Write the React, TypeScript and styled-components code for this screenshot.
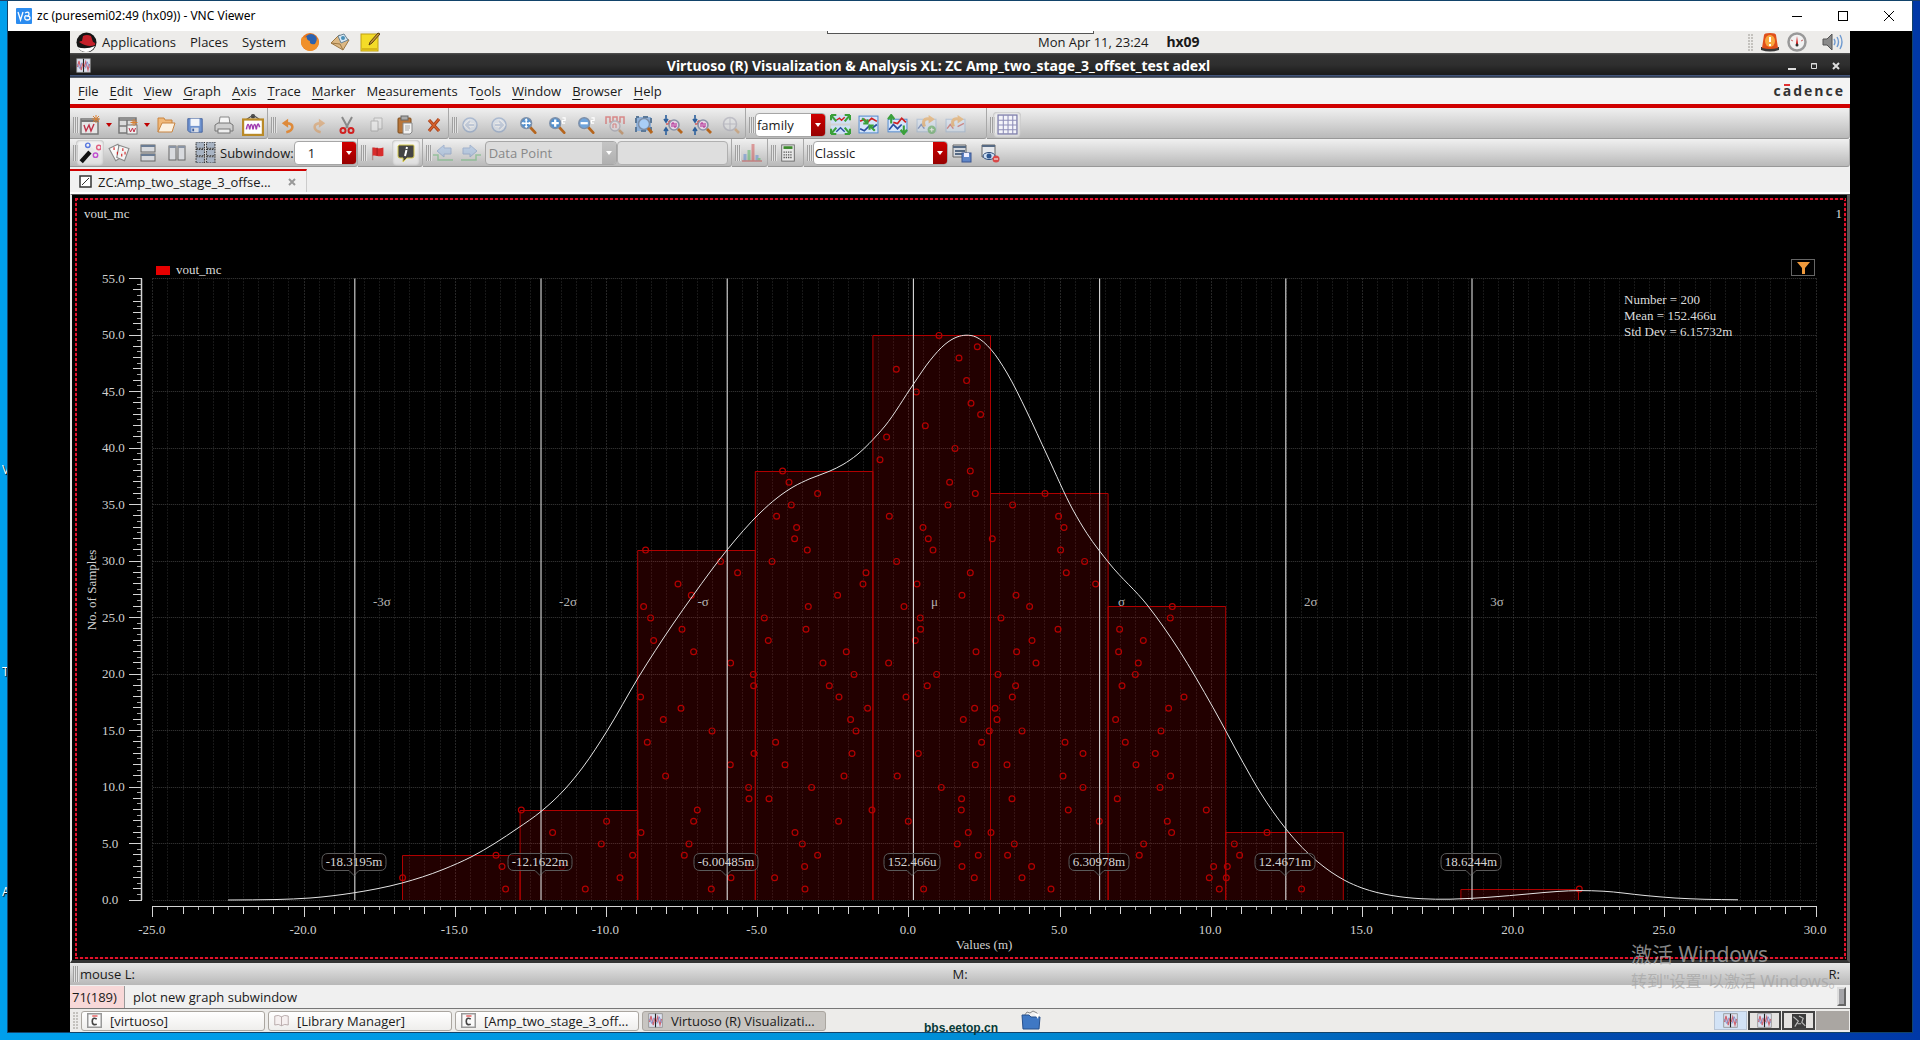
import React from "react";
import styled, { createGlobalStyle, css } from "styled-components";

const ui = `"Open Sans", "Noto Sans", sans-serif`;
const serif = `"Liberation Serif", "DejaVu Serif", serif`;
const cjk = `"Noto Sans", "Noto Sans CJK SC", sans-serif`;

const GlobalStyle = createGlobalStyle`
  *, *::before, *::after { box-sizing: border-box; }
  body { margin: 0; background: #0078d0; }
  button, select, input { font: inherit; color: inherit; margin: 0; }
`;

/* ---------- desktop and window ---------- */

const Desktop = styled.div`
  position: relative;
  display: flex;
  min-height: 100vh;
  padding: 1px 8px 8px;
  overflow: hidden;
  font: 13px/18px ${ui};
  color: #1a1a1a;
  background: linear-gradient(90deg, #009fec 0%, #0093da 45%, #0080cc 60%, #0050b0 78%, #0038a6 100%);
  box-shadow: inset 0 1px #1c3f68;
`;

const IconLabel = styled.span<{ $top: string }>`
  position: absolute;
  left: 2px;
  top: ${(p) => p.$top};
  width: 6px;
  overflow: hidden;
  font-size: 12px;
  color: #fff;
  text-shadow: 1px 1px 1px #000;
`;

const Window = styled.div`
  position: relative;
  flex: 1;
  display: flex;
  flex-direction: column;
  background: #000;
  box-shadow: 0 0 0 1px #12436a;
`;

const VncBar = styled.header`
  display: flex;
  align-items: center;
  height: 30px;
  padding-left: 8px;
  background: #fff;
  color: #000;
  font: 12px/18px "Noto Sans", sans-serif;
`;

const VncTitle = styled.span`
  padding-left: 5px;
`;

const Fill = styled.div<{ $grow?: number }>`
  flex: ${(p) => p.$grow ?? 1};
`;

const CaptionButton = styled.button`
  width: 46px;
  height: 30px;
  display: grid;
  place-items: center;
  padding: 0;
  border: 0;
  background: none;
`;

const Guest = styled.div`
  flex: 1;
  display: flex;
  flex-direction: column;
  margin: 0 62px;
  background: #f0f0f0;
`;

const VncHandle = styled.div`
  position: absolute;
  top: 30px;
  left: 43%;
  width: 267px;
  height: 3px;
  background: #fff;
  border: 1px solid #555;
  border-top: 0;
`;

/* ---------- gnome panel ---------- */

const Panel = styled.div`
  display: flex;
  align-items: center;
  height: 22px;
  padding: 0 6px;
  background: #edecea;
`;

const PanelButton = styled.button`
  border: 0;
  padding: 0;
  margin-right: 14px;
  background: none;
  display: flex;
  align-items: center;
  gap: 5px;
`;

const Launchers = styled.div`
  display: flex;
  gap: 10px;
`;

const Clock = styled.div`
  display: flex;
  gap: 18px;
  b { font: 700 14px/18px "Noto Sans", sans-serif; }
`;

const Tray = styled.div`
  display: flex;
  align-items: center;
  gap: 7px;
`;

const Dots = styled.i`
  width: 5px;
  height: 17px;
  background: radial-gradient(circle at 1px 1px, #c4c2be 1px, transparent 1px) 0 0 / 3px 3px;
`;

/* ---------- application window ---------- */

const AppTitle = styled.div`
  display: grid;
  grid-template-columns: 15px 1fr auto;
  align-items: center;
  height: 25px;
  padding: 0 8px 0 6px;
  color: #fff;
  font: 700 14px/18px "Noto Sans", sans-serif;
  text-align: center;
  background: linear-gradient(#555 0, #333 2px, #2e2e2e 12px, #1a1a1a 22px, #4a5f8c 22px, #2a3548 24px, #8c8c8c 25px);
`;

const AppControls = styled.div`
  display: flex;
  justify-content: flex-end;
  gap: 10px;
`;

const TinyButton = styled.button`
  width: 12px;
  height: 14px;
  padding: 0;
  border: 0;
  display: grid;
  place-items: center;
  background: none;
`;

const MenuBar = styled.nav`
  display: flex;
  align-items: center;
  gap: 11px;
  height: 30px;
  padding: 0 5px 0 8px;
  background: #f4f4f4;
  border-bottom: 4px solid #d00000;
`;

const MenuButton = styled.button`
  border: 0;
  padding: 0;
  background: none;
  u { text-underline-offset: 3px; }
`;

const Brand = styled.div`
  margin-left: auto;
  font: 700 14px/18px "Open Sans", sans-serif;
  letter-spacing: 2px;
  color: #333;
  span { position: relative; }
  span::after {
    content: "";
    position: absolute;
    left: 1px;
    top: 3px;
    width: 6px;
    height: 2px;
    background: #e03030;
  }
`;

const ToolRow = styled.div<{ $h: number }>`
  display: flex;
  height: ${(p) => p.$h}px;
`;

const Group = styled.div<{ $w?: number; $gap?: number; $top?: number }>`
  display: flex;
  align-items: center;
  gap: ${(p) => p.$gap ?? 0}px;
  ${(p) => (p.$w ? css`flex: 0 0 ${p.$w}px;` : css`flex: 1;`)}
  padding: ${(p) => p.$top ?? 0}px 0 0 3px;
  background: linear-gradient(#f0f0f0, #d8d8d8 45%, #b9b9b9);
  border-bottom: 1px solid #989898;
  border-right: 1px solid #a8a8a8;
  border-radius: 0 0 3px 0;
`;

const Grip = styled.i`
  flex: none;
  width: 6px;
  height: 16px;
  background: repeating-linear-gradient(90deg, #a0a0a0 0 1px, #e2e2e2 1px 2px);
  & + button { margin-left: -3px; }
`;

const ToolButton = styled.button<{ $on?: boolean; $w?: number; $dim?: boolean }>`
  flex: none;
  width: ${(p) => p.$w ?? 28}px;
  height: 26px;
  padding: 0;
  border: 0;
  border-radius: 4px;
  display: grid;
  place-items: center;
  background: ${(p) => (p.$on ? "rgba(255,255,255,.5)" : "none")};
  box-shadow: ${(p) => (p.$on ? "inset 0 0 3px #999" : "none")};
  svg { opacity: ${(p) => (p.$dim ? 0.45 : 1)}; }
`;

const ComboLabel = styled.label`
  display: flex;
  align-items: center;
  white-space: nowrap;
`;

const ComboBox = styled.span<{ $w: number; $off?: boolean; $h: number }>`
  position: relative;
  display: block;
  flex: none;
  width: ${(p) => p.$w}px;
  height: ${(p) => p.$h}px;
  border-radius: 4px;
  overflow: hidden;
  border: 1px solid #a6a6a6;
  background: ${(p) => (p.$off ? "#dcdcdc" : "#fff")};
  color: ${(p) => (p.$off ? "#888" : "#1a1a1a")};
  &::before {
    content: "";
    position: absolute;
    right: 0;
    top: 0;
    bottom: 0;
    width: 14px;
    background: ${(p) => (p.$off ? "linear-gradient(#c4c4c4, #b0b0b0)" : "linear-gradient(#d00000, #960000)")};
  }
  &::after {
    content: "";
    position: absolute;
    right: 4px;
    top: 9px;
    border: 3px solid transparent;
    border-top: 4px solid #fff;
    border-bottom: 0;
  }
`;

const Select = styled.select<{ $pad: number }>`
  appearance: none;
  width: 100%;
  height: 100%;
  padding: 0 16px 0 ${(p) => p.$pad}px;
  border: 0;
  background: transparent;
  opacity: 1;
  &:disabled { color: #888; opacity: 1; }
`;

const LineEdit = styled.input`
  width: 111px;
  height: 24px;
  border: 1px solid #b0b0b0;
  border-radius: 4px;
  background: #dedede;
`;

const TabStrip = styled.div`
  display: flex;
  height: 27px;
  padding-top: 2px;
  background: #efefef;
  border-bottom: 2px solid #fff;
`;

const Tab = styled.div`
  display: flex;
  align-items: center;
  gap: 6px;
  width: 237px;
  padding: 0 10px 0 9px;
  border-top: 2px solid #d00000;
  border-right: 1px solid #ccc;
  background: #f1f1f1;
`;

const TabClose = styled.button`
  margin-left: auto;
  padding: 0;
  border: 0;
  background: none;
  display: grid;
`;

/* ---------- plot ---------- */

const Canvas = styled.main`
  flex: 1;
  display: flex;
  padding: 3px 1px 1px 3px;
  background: #000;
  border: solid;
  border-width: 1px 3px 3px 2px;
  border-color: #555 #555 #333 #e6e6e6;
`;

const dash = "#e4102c 0 3px, #200 3px 5px";
const DashFrame = styled.div`
  position: relative;
  flex: 1;
  display: flex;
  flex-direction: column;
  padding: 2px;
  font: 13px/16px ${serif};
  color: #dcdcdc;
  background:
    repeating-linear-gradient(90deg, ${dash}) 0 0 / 100% 2px no-repeat,
    repeating-linear-gradient(90deg, ${dash}) 0 100% / 100% 2px no-repeat,
    repeating-linear-gradient(180deg, ${dash}) 0 0 / 2px 100% no-repeat,
    repeating-linear-gradient(180deg, ${dash}) 100% 0 / 2px 100% no-repeat,
    #000;
`;

const PlotHeader = styled.div`
  display: flex;
  justify-content: space-between;
  padding: 6px 2px 37px 7px;
`;

const LegendRow = styled.div`
  display: flex;
  align-items: flex-end;
  height: 19px;
  padding: 0 29px 0 79px;
`;

const Legend = styled.span`
  display: flex;
  align-items: center;
  gap: 6px;
`;

const Swatch = styled.i`
  width: 14px;
  height: 9px;
  background: #e80000;
`;

const FilterButton = styled.button`
  align-self: flex-start;
  margin-left: auto;
  width: 24px;
  height: 17px;
  padding: 0;
  display: grid;
  place-items: center;
  background: #000;
  border: 1px solid #666;
`;

const Stats = styled.div`
  position: absolute;
  top: 94px;
  right: 112px;
  width: 110px;
  white-space: nowrap;
`;

const Chart = styled.svg`
  flex: 1 1 0;
  display: block;
  width: 100%;
  height: 0;
  min-height: 300px;
  overflow: visible;
  font: 13px ${serif};
`;

/* ---------- footer rows ---------- */

const MouseBar = styled.div`
  display: grid;
  grid-template-columns: 1fr auto 1fr;
  align-items: center;
  height: 22px;
  padding: 0 3px;
  background: linear-gradient(#e6e6e6, #cfcfcf 50%, #b8b8b8);
  > :last-child { text-align: right; padding-right: 7px; }
`;

const MouseLeft = styled.span`
  display: flex;
  align-items: center;
  gap: 1px;
`;

const MessageBar = styled.div`
  display: flex;
  align-items: center;
  height: 24px;
  padding-right: 4px;
  background: #f0f0f0;
  border-bottom: 1px solid #777;
`;

const Count = styled.span`
  width: 55px;
  padding: 2px 0 2px 2px;
  margin-right: 8px;
  background: #f8d8d8;
  border-right: 1px solid #999;
`;

const Nub = styled.i`
  margin-left: auto;
  width: 9px;
  height: 19px;
  border: 2px solid #ddd;
  border-right-color: #666;
  border-bottom-color: #666;
  background: #a4a4a8;
`;

const TaskBar = styled.div`
  position: relative;
  display: flex;
  align-items: center;
  gap: 3px;
  height: 23px;
  padding: 0 1px 0 3px;
  background: #edecea;
`;

const TaskButton = styled.button<{ $active?: boolean }>`
  width: 184px;
  height: 20px;
  display: flex;
  align-items: center;
  gap: 8px;
  padding: 0 5px;
  border: 1px solid #aaa6a0;
  border-radius: 3px;
  white-space: nowrap;
  background: ${(p) => (p.$active ? "#c8c5c1" : "linear-gradient(#fff, #efeeec)")};
`;

const Pager = styled.div`
  margin-left: auto;
  display: flex;
  gap: 1px;
`;

const Space = styled.button<{ $kind: "on" | "open" | "empty" }>`
  width: 33px;
  height: 19px;
  padding: 0;
  display: grid;
  place-items: center;
  background: ${(p) => ({ on: "#d3e3f6", open: "#e4e2e0", empty: "#aaa6a2" })[p.$kind]};
  border: ${(p) => ({ on: "1px solid #b8c4d4", open: "2px solid #444", empty: "0" })[p.$kind]};
`;

const SiteMark = styled.div`
  position: absolute;
  left: 854px;
  bottom: -4px;
  font: 700 12px/16px "Liberation Sans Narrow", "Liberation Sans", sans-serif;
  color: #063a38;
`;

const FolderSpot = styled.div`
  position: absolute;
  left: 951px;
  top: 1px;
`;

const Watermark = styled.div`
  position: absolute;
  right: 84px;
  bottom: 39px;
  width: 197px;
  font: 16px/24px ${cjk};
  white-space: nowrap;
  color: rgba(160, 160, 160, 0.65);
  pointer-events: none;
`;

const WatermarkHead = styled.div`
  font-size: 21px;
  line-height: 30px;
  color: rgba(170, 170, 170, 0.8);
`;

/* ---------- icons ---------- */

const Ico = ({ s = 20, children }: { s?: number; children: React.ReactNode }) => (
  <svg width={s} height={s} viewBox="0 0 20 20" fill="none" aria-hidden="true">
    {children}
  </svg>
);

const Lens = ({ fill = "#b9d5f3", children }: { fill?: string; children?: React.ReactNode }) => (
  <>
    <path d="M12.5 12.5l5.5 6" stroke="#b5651d" strokeWidth="3" strokeLinecap="round" />
    <circle cx="8" cy="8" r="6" fill={fill} stroke="#7d8fa8" strokeWidth="1.6" />
    {children}
  </>
);

const Wave = () => (
  <Ico s={15}>
    <rect x="1" y="1" width="18" height="18" fill="#dde3f0" stroke="#888" />
    <path d="M10 1v18" stroke="#222" strokeWidth="1.5" />
    <path d="M2 12l2-8 3 12 2-9M11 12l2-7 3 11 2-8" stroke="#cf6470" strokeWidth="1.6" />
    <path d="M2 8l3 6 3-8M12 14l3-9 3 8" stroke="#7f90cc" strokeWidth="1.2" />
  </Ico>
);

const icons: Record<string, React.ReactNode> = {
  newWin: (
    <Ico>
      <rect x="1" y="4" width="17" height="15" fill="#e6e6e6" stroke="#777" strokeWidth="1.5" />
      <path d="M1 6h17" stroke="#777" strokeWidth="2" />
      <path d="M4 10l2 6 3-6 2 6 3-7" stroke="#c03048" strokeWidth="1.4" />
      <path d="M16 0v8M12 4h8M13 1l6 6M19 1l-6 6" stroke="#d98032" />
    </Ico>
  ),
  newSub: (
    <Ico>
      <rect x="1" y="3" width="17" height="15" fill="#dcdcdc" stroke="#777" strokeWidth="1.5" />
      <path d="M1 5h17M9 5v13M1 11h17" stroke="#777" strokeWidth="1.5" />
      <rect x="9" y="10" width="10" height="9" fill="#eee" stroke="#777" />
      <path d="M11 13l1.5 4 2-4 1.500 4 1.500-4" stroke="#c03048" />
      <path d="M16 4v7M12.500 7.500h7M13.500 5l5 5M18.500 5l-5 5" stroke="#d98032" />
    </Ico>
  ),
  open: (
    <Ico>
      <path d="M2 17V3h6l1 2h7v4" fill="#f0b878" stroke="#c98440" />
      <path d="M2 17L6 8h13l-3 9z" fill="#fbf0e0" stroke="#c98440" />
    </Ico>
  ),
  save: (
    <Ico s={18}>
      <path d="M2 3h16v15H4l-2-2z" fill="#6f93cf" stroke="#3f5f9c" />
      <rect x="5" y="3" width="10" height="8" fill="#f2f5fa" />
      <rect x="6" y="13" width="8" height="5" fill="#d8dde6" />
      <rect x="7" y="14" width="2" height="3" fill="#3f5f9c" />
    </Ico>
  ),
  print: (
    <Ico>
      <path d="M5 9l1-7h9l1 7" fill="#f6f6f6" stroke="#888" />
      <path d="M1 10l3-2h12l3 2v6H1z" fill="#cfcfcf" stroke="#777" />
      <rect x="4" y="14" width="12" height="4" fill="#eee" stroke="#777" />
    </Ico>
  ),
  image: (
    <Ico s={22}>
      <circle cx="10" cy="2" r="2" fill="#444" />
      <path d="M4 5l6-4 6 4" stroke="#555" />
      <rect x="1" y="5" width="18" height="14" fill="#fff" stroke="#b98a28" strokeWidth="2" />
      <path d="M4 14c1-6 2-6 3 0 1-6 2-6 3 0 1-6 2-6 3 0 1-6 2-6 3-2" stroke="#a03cb0" strokeWidth="1.4" />
    </Ico>
  ),
  undo: (
    <Ico s={18}>
      <path d="M7 18c9-2 9-10 0-10" stroke="#de8a3a" strokeWidth="2.800" />
      <path d="M2 8l7-5v10z" fill="#de8a3a" />
    </Ico>
  ),
  redo: (
    <Ico s={18}>
      <path d="M13 18c-9-2-9-10 0-10" stroke="#de8a3a" strokeWidth="2.800" />
      <path d="M18 8l-7-5v10z" fill="#de8a3a" />
    </Ico>
  ),
  cut: (
    <Ico>
      <path d="M5 2l6 11M15 2L9 13" stroke="#8a8a8a" strokeWidth="2" />
      <circle cx="6" cy="15.500" r="2.500" stroke="#d02020" strokeWidth="2" />
      <circle cx="14" cy="15.500" r="2.500" stroke="#d02020" strokeWidth="2" />
    </Ico>
  ),
  copy: (
    <Ico>
      <path d="M8 3h8v11H8z" fill="#eee" stroke="#888" />
      <path d="M5 6h7v10H5z" fill="#f8f8f8" stroke="#888" />
    </Ico>
  ),
  paste: (
    <Ico>
      <rect x="3" y="3" width="13" height="15" rx="1" fill="#b8763a" stroke="#7d4c1c" />
      <rect x="6" y="1" width="7" height="4" fill="#aaa" stroke="#666" />
      <path d="M8 8h9v9l-2 2H8z" fill="#f2f2f2" stroke="#888" />
      <path d="M10 11h5M10 13h5M10 15h4" stroke="#aaa" />
    </Ico>
  ),
  del: (
    <Ico>
      <path d="M5 5l10 11M15 4L5 16" stroke="#a8401c" strokeWidth="3.200" />
      <path d="M5 5l10 11M15 4L5 16" stroke="#d8642c" strokeWidth="1.200" />
    </Ico>
  ),
  back: (
    <Ico>
      <circle cx="10" cy="10" r="7" fill="#dbe6f5" stroke="#6f8fc0" strokeWidth="1.500" />
      <path d="M14 10H6M10 6l-4 4 4 4" stroke="#fff" strokeWidth="4" />
      <path d="M14 10H6M10 6l-4 4 4 4" stroke="#a9bcdc" strokeWidth="2" />
    </Ico>
  ),
  fwd: (
    <Ico>
      <circle cx="10" cy="10" r="7" fill="#dbe6f5" stroke="#6f8fc0" strokeWidth="1.500" />
      <path d="M6 10h8M10 6l4 4-4 4" stroke="#fff" strokeWidth="4" />
      <path d="M6 10h8M10 6l4 4-4 4" stroke="#a9bcdc" strokeWidth="2" />
    </Ico>
  ),
  fit: (
    <Ico s={18}>
      <Lens fill="#4f8fcf">
        <path d="M8 4v8M4 8h8" stroke="#fff" strokeWidth="1.500" />
        <path d="M8 2.500l2 2.500H6zM8 13.500l2-2.500H6zM2.500 8l2.500 2V6zM13.500 8l-2.500 2V6z" fill="#fff" />
      </Lens>
    </Ico>
  ),
  zin: (
    <Ico s={18}>
      <Lens fill="#4f8fcf">
        <path d="M8 4v8M4 8h8" stroke="#fff" strokeWidth="2.500" />
      </Lens>
      <path d="M16 2h3v3h-3v3h3" stroke="#fff" strokeWidth="1.300" />
    </Ico>
  ),
  zout: (
    <Ico s={18}>
      <Lens fill="#6fa4dc">
        <path d="M4 8h8" stroke="#fff" strokeWidth="2.500" />
      </Lens>
      <path d="M16 2h3v3h-3v3h3" stroke="#fff" strokeWidth="1.300" />
    </Ico>
  ),
  zwave: (
    <Ico>
      <path d="M1 9V2h4v5h3V2h4v5h3V2h4v7" stroke="#d02020" strokeWidth="1.500" />
      <circle cx="10" cy="11" r="5" fill="#e8d8e0" stroke="#889" strokeWidth="1.300" />
      <path d="M14 15l4 4" stroke="#b5651d" strokeWidth="2.500" />
      <path d="M8 13v-4h3v4" stroke="#d02020" />
    </Ico>
  ),
  zarea: (
    <Ico>
      <rect x="2" y="2" width="15" height="14" fill="#8fb0d8" stroke="#5a7898" strokeWidth="2" strokeDasharray="5 4" strokeDashoffset="2" />
      <circle cx="10" cy="9" r="5.500" fill="#a9cdf5" stroke="#7d8fa8" strokeWidth="1.500" />
      <path d="M14 13l4 5" stroke="#b5651d" strokeWidth="3" />
    </Ico>
  ),
  zy: (
    <Ico>
      <path d="M3 0v6M1 4l2 3 2-3M3 20v-6M1 16l2-3 2 3" stroke="#2c5f9c" strokeWidth="1.600" />
      <path d="M3 9h3V6h3" stroke="#d02020" />
      <circle cx="11" cy="10" r="5" fill="#e4d4e4" stroke="#8a93a8" strokeWidth="1.600" />
      <path d="M9 12V8h2v4h2V8" stroke="#b02090" />
      <path d="M15 14l4 4" stroke="#b5651d" strokeWidth="2.800" />
    </Ico>
  ),
  zlast: (
    <Ico>
      <circle cx="9" cy="9" r="6.500" fill="#e4e6e8" stroke="#99a" strokeWidth="1.500" />
      <path d="M2 9h14M9 3v12" stroke="#99a" />
      <path d="M14 14l4 4" stroke="#c98440" strokeWidth="2.500" />
    </Ico>
  ),
  split: (
    <Ico s={21}>
      <rect x="1" y="1" width="18" height="8" fill="#cfe0f6" />
      <rect x="1" y="11" width="18" height="8" fill="#cfe0f6" />
      <path d="M6 6l3-2 2 2 3-3" stroke="#d02020" strokeWidth="1.300" />
      <path d="M6 17l4-4 4 4" stroke="#2a4fa0" strokeWidth="1.300" />
      <path d="M1 1h5M1 1v5M1 1l5 6M19 1h-5M19 1v5M19 1l-5 6M1 19h5M1 19v-5M1 19l5-6M19 19h-5M19 19v-5M19 19l-5-6" stroke="#3aa03a" strokeWidth="2" />
    </Ico>
  ),
  merge: (
    <Ico s={21}>
      <rect x="1" y="2" width="18" height="16" fill="#d6e6fa" stroke="#5a8fd0" />
      <path d="M2 7l4-2 3 3 4-4 5 3" stroke="#d02020" strokeWidth="1.600" />
      <path d="M2 14l4 2 5-5 3 2 4-3" stroke="#2a4fa0" strokeWidth="1.600" />
      <path d="M4 4l5 5M9 5v4H5M16 16l-5-5M11 15v-4h4" stroke="#3aa03a" strokeWidth="2" />
    </Ico>
  ),
  swap: (
    <Ico s={21}>
      <rect x="1" y="5" width="18" height="12" fill="#d6e6fa" stroke="#5a8fd0" />
      <path d="M6 8l4 1 4-5 4 4" stroke="#d02020" strokeWidth="1.600" />
      <path d="M2 15l4-5 4 4 4-4" stroke="#2a4fa0" strokeWidth="1.600" />
      <path d="M4 9V2M1 5l3-4 3 4M16 11v7M13 15l3 4 3-4" stroke="#3aa03a" strokeWidth="2" />
    </Ico>
  ),
  reload: (
    <Ico s={21}>
      <rect x="1" y="5" width="18" height="12" fill="#d6e6fa" stroke="#88a8d0" />
      <path d="M2 14l3-4 3 4M12 12l6-3" stroke="#c03030" strokeWidth="1.300" />
      <path d="M8 12c-3-8 3-8 6-7" stroke="#e8932c" strokeWidth="3" />
      <path d="M12 1l6 4-6 4z" fill="#e8932c" />
    </Ico>
  ),
  reloadAdd: (
    <Ico s={21}>
      <rect x="1" y="5" width="18" height="12" fill="#d6e6fa" stroke="#88a8d0" />
      <path d="M2 14l3-4 3 4" stroke="#2a4fa0" strokeWidth="1.300" />
      <path d="M8 12c-3-8 3-8 6-7" stroke="#e8932c" strokeWidth="3" />
      <path d="M12 1l6 4-6 4z" fill="#e8932c" />
      <circle cx="15" cy="15" r="4" fill="#3aa03a" />
      <path d="M15 13v4M13 15h4" stroke="#fff" />
    </Ico>
  ),
  grid: (
    <Ico s={21}>
      <rect x="1" y="1" width="18" height="18" fill="#f4f4fa" stroke="#7a7aa8" strokeWidth="1.200" />
      <path d="M6 1v18M10.500 1v18M15 1v18M1 6h18M1 10.500h18M1 15h18" stroke="#8e8eb8" />
    </Ico>
  ),
  wand: (
    <Ico s={22}>
      <path d="M2 18L10 9" stroke="#111" strokeWidth="4" />
      <path d="M10 9l3-3" stroke="#e8e8e8" strokeWidth="4" />
      <circle cx="8" cy="3" r="2" stroke="#5a7ae0" strokeWidth="1.300" />
      <circle cx="18" cy="5" r="2" stroke="#e06080" strokeWidth="1.300" />
      <circle cx="15" cy="12" r="2" stroke="#c050d0" strokeWidth="1.300" />
    </Ico>
  ),
  cards: (
    <Ico s={22}>
      <path d="M1 6l8-4 5 11-7 4z" fill="#fafafa" stroke="#888" />
      <path d="M10 3l9 3-4 11-7-3z" fill="#f4f4f4" stroke="#888" />
      <path d="M5 6h1M8 10h1M13 7h1M15 10h1M12 12h1" stroke="#d02020" strokeWidth="2.500" />
    </Ico>
  ),
  rows: (
    <Ico>
      <rect x="3" y="2" width="14" height="7" fill="#d8dade" stroke="#666" />
      <rect x="3" y="11" width="14" height="7" fill="#d8dade" stroke="#666" />
      <path d="M3 3h14M3 12h14" stroke="#6a7c94" strokeWidth="2" />
    </Ico>
  ),
  cols: (
    <Ico>
      <rect x="2" y="3" width="7" height="14" fill="#d8dade" stroke="#666" />
      <rect x="11" y="3" width="7" height="14" fill="#d8dade" stroke="#666" />
      <path d="M2 4h7M11 4h7" stroke="#8a94a4" strokeWidth="2" />
    </Ico>
  ),
  tiles: (
    <Ico s={21}>
      {[1, 8, 15].map((y) =>
        [1, 11].map((x) => (
          <rect key={`${x}${y}`} x={x} y={y - 1} width="8" height="6" fill="#a8b4c4" stroke="#333" strokeDasharray="1.500 1" />
        )),
      )}
    </Ico>
  ),
  flag: (
    <Ico s={18}>
      <path d="M4 4v14" stroke="#b09090" strokeWidth="1.500" />
      <path d="M4 4c4-1 6 2 12 0v9c-5 2-8-1-12 0z" fill="#d82c2c" />
      <path d="M9 4v9" stroke="#a01c1c" />
    </Ico>
  ),
  info: (
    <Ico>
      <path d="M3 2h14q1 0 1 1v10q0 2-2 2h-5l-4 4v-4H4q-2 0-2-2V3z" fill="#444" stroke="#d8cc50" />
      <path d="M11 4l-.5 2M10.500 7L9 13" stroke="#fff" strokeWidth="2" />
    </Ico>
  ),
  prev: (
    <Ico>
      <path d="M0 12h5v5h15" stroke="#50b060" strokeWidth="1.500" />
      <path d="M4 8l7-6v3h7v6h-7v3z" fill="#8fb4e4" stroke="#5a7fb8" />
    </Ico>
  ),
  next: (
    <Ico>
      <path d="M0 17h15v-5h5" stroke="#50b060" strokeWidth="1.500" />
      <path d="M16 8L9 2v3H2v6h7v3z" fill="#8fb4e4" stroke="#5a7fb8" />
    </Ico>
  ),
  hist: (
    <Ico>
      <path d="M3 18v-7M15 18v-6" stroke="#4a7fd0" strokeWidth="3" />
      <path d="M7 18V7M17 18v-3" stroke="#40b050" strokeWidth="3" />
      <path d="M11 18V1" stroke="#d04040" strokeWidth="3" />
      <path d="M0 18h20" stroke="#c03030" strokeWidth="1.500" />
    </Ico>
  ),
  calc: (
    <Ico s={18}>
      <rect x="3" y="1" width="14" height="18" fill="#e8e8e8" stroke="#666" />
      <path d="M5 4h10" stroke="#3a8a2a" strokeWidth="3" />
      <path d="M5 9h10M5 12h10M5 15h10" stroke="#555" strokeWidth="1.500" strokeDasharray="1.500 1" />
    </Ico>
  ),
  saveView: (
    <Ico>
      <path d="M1 2h13v12H1z" fill="#d4d8de" stroke="#666" />
      <path d="M1 4h13M3 8h10M3 11h10" stroke="#566a84" strokeWidth="2" />
      <rect x="10" y="10" width="9" height="9" fill="#5f86c8" stroke="#3a5590" />
      <rect x="12" y="10" width="5" height="4" fill="#eef" />
    </Ico>
  ),
  hideView: (
    <Ico>
      <path d="M2 2h13v12H2z" fill="#e6e8ec" stroke="#666" />
      <path d="M2 3h13" stroke="#566a84" strokeWidth="2" />
      <ellipse cx="9" cy="13" rx="6" ry="3.500" fill="#cfe0f4" stroke="#2c4a78" />
      <circle cx="9" cy="13" r="2.500" fill="#2c5590" />
      <circle cx="16" cy="16" r="3.500" fill="#d84848" />
      <path d="M14 16h4" stroke="#fff" />
    </Ico>
  ),
};

const Drop = styled.button`
  flex: none;
  width: 10px;
  height: 22px;
  padding: 0;
  border: 0;
  background: none;
  display: grid;
  place-items: center;
  &::before {
    content: "";
    border: 3px solid transparent;
    border-top: 4px solid #c00000;
    border-bottom: 0;
  }
`;

const Tool = ({ name, label, ...rest }: { name: string; label: string; $on?: boolean; $w?: number; $dim?: boolean }) => (
  <ToolButton type="button" aria-label={label} {...rest}>
    {icons[name]}
  </ToolButton>
);

const Combo = ({ value, w, h, pad = 3, label, off }: { value: string; w: number; h: number; pad?: number; label: string; off?: boolean }) => (
  <ComboBox $w={w} $h={h} $off={off}>
    <Select $pad={pad} aria-label={label} disabled={off} defaultValue={value}>
      <option>{value}</option>
    </Select>
  </ComboBox>
);

const menus: [string, number][] = [
  ["File", 0], ["Edit", 0], ["View", 0], ["Graph", 0], ["Axis", 0], ["Trace", 0], ["Marker", 0],
  ["Measurements", 1], ["Tools", 1], ["Window", 0], ["Browser", 0], ["Help", 0],
];

/* ---------- histogram ---------- */

const X0 = 908.8;
const XS = 30.24;
const Y0 = 900;
const YS = 11.3;
const px = (v: number) => X0 + v * XS;
const py = (n: number) => Y0 - n * YS;

const binLeft = 402.5;
const binWidth = 117.6;
const bins = [4, 8, 31, 38, 50, 36, 26, 6, 0, 1];

/* Sample positions of every bin, one per count level. */
const samples: number[][] = [
  [505.3, 402.3, 501.7, 495.7],
  [585, 619.7, 561.7, 632.3, 601, 552.3, 606.3, 521],
  [711, 730.7, 748.7, 684, 688.7, 640.7, 693.3, 697, 748.7, 748.3, 665.3, 730, 753.7, 647, 711.7, 663, 680.7, 640.3, 753.3, 753, 730.3, 693.3, 653.3, 681.7, 650.3, 643.3, 691, 677.7, 737.3, 720.3, 645.3],
  [804.7, 774.3, 804.3, 817.3, 802, 794.7, 838.3, 871.7, 768.7, 811.3, 843.7, 784.7, 851.7, 775.3, 855.7, 850.3, 867.3, 838.7, 829, 853.7, 822.7, 846, 768, 805.7, 764, 808, 837.3, 862.7, 865.7, 771.7, 807, 794.3, 796.3, 776.3, 791, 817.3, 788.7, 782.3],
  [923.3, 974, 961.7, 978, 957, 968, 908, 961, 961.3, 941, 897, 975, 918, 981.3, 989, 963, 974.3, 905.7, 927, 936.3, 888.3, 975.7, 915, 920.3, 920, 903.7, 961.7, 916.7, 970, 896.3, 932.7, 928, 922.7, 889, 947.7, 975, 949.3, 970, 879.7, 954.7, 886.3, 925, 980.3, 970.7, 916, 966.3, 896, 958.7, 977, 938.7],
  [1050.7, 1021.7, 1031.3, 1007.3, 1014, 990.7, 1099, 1068, 1011.7, 1082.7, 1062.7, 1006.7, 1082.7, 1064.7, 1021.7, 996.7, 994.7, 1012, 1015.3, 997.7, 1035.7, 1016.3, 1031.7, 1057.7, 1000.7, 1029.3, 1015.7, 1095.3, 1066, 1084.3, 1060.3, 992, 1063.7, 1058.3, 1012.3, 1044.7],
  [1219, 1209, 1213.3, 1139, 1143.3, 1171.3, 1167, 1206, 1117, 1159.7, 1170.3, 1135.7, 1155, 1125, 1160.7, 1115.3, 1168.3, 1183.7, 1121.7, 1135, 1138, 1118.3, 1143, 1119.3, 1170, 1172],
  [1301.3, 1226, 1227, 1239.3, 1234, 1266.7],
  [],
  [1579],
];

const density: [number, number][] = [
  [228, 900], [277, 899.5], [310, 898], [354, 892.8], [402, 883], [443, 869.5], [472, 856.5],
  [518, 828], [541, 811.5], [565, 789], [583, 767], [607, 731], [638, 678],
  [673, 624], [693, 595.5], [727, 550], [760, 513], [777, 498], [793, 487], [810, 478.7],
  [830, 471], [843, 464.5], [857, 454.8], [873, 439.5], [885, 426], [913.5, 384], [930, 360.5],
  [945, 344.3], [957, 337], [966, 335.2], [976, 337], [991, 349.5], [1007, 373], [1027, 412],
  [1047, 455], [1073, 510], [1087, 533.5], [1109, 563], [1148, 606], [1179, 650], [1213, 707.5],
  [1243, 762.5], [1260, 792], [1286, 829], [1302, 847.3], [1317, 861.3], [1331, 872], [1345, 880.5],
  [1362, 888], [1377, 892.5], [1393, 895.7], [1421, 898.7], [1450, 899.2], [1488, 897.3],
  [1531, 893.7], [1557, 891.5], [1580, 890.6], [1603, 891.2], [1645, 895.5], [1675, 898],
  [1705, 899.3], [1738, 899.8],
];

/* Hermite spline through the density points, with slopes weighted by spacing. */
const slope = (i: number) => {
  const d = (j: number) => (density[j + 1][1] - density[j][1]) / (density[j + 1][0] - density[j][0]);
  if (i === 0) return d(0);
  if (i === density.length - 1) return d(i - 1);
  const h0 = density[i][0] - density[i - 1][0];
  const h1 = density[i + 1][0] - density[i][0];
  return (d(i - 1) * h1 + d(i) * h0) / (h0 + h1);
};

const curve = density.reduce((d, p, i, a) => {
  if (i === 0) return `M${p[0]} ${p[1]}`;
  const q = a[i - 1];
  const h = (p[0] - q[0]) / 3;
  const y1 = q[1] + slope(i - 1) * h;
  const y2 = p[1] - slope(i) * h;
  return `${d}C${(q[0] + h).toFixed(1)} ${y1.toFixed(1)} ${(p[0] - h).toFixed(1)} ${y2.toFixed(1)} ${p[0]} ${p[1]}`;
}, "");

const sigmas = [
  { v: -18.3195, text: "-18.3195m", name: "-3σ", dx: 27, w: 64 },
  { v: -12.1622, text: "-12.1622m", name: "-2σ", dx: 27, w: 64 },
  { v: -6.00485, text: "-6.00485m", name: "-σ", dx: -24, w: 64 },
  { v: 0.152466, text: "152.466u", name: "μ", dx: 21, w: 56 },
  { v: 6.30978, text: "6.30978m", name: "σ", dx: 22, w: 60 },
  { v: 12.4671, text: "12.4671m", name: "2σ", dx: 25, w: 60 },
  { v: 18.6244, text: "18.6244m", name: "3σ", dx: 25, w: 60 },
];

const range = (a: number, b: number, step: number) =>
  Array.from({ length: Math.round((b - a) / step) + 1 }, (_, i) => a + i * step);

const badge = (cx: number, w: number) => {
  const l = cx - w / 2;
  const r = cx + w / 2;
  return `M${l + 6} 853.5H${r - 6}q6 0 6 6v5q0 6-6 6H${cx + 5}L${cx} 875.5L${cx - 5} 870.5H${l + 6}q-6 0-6-6v-5q0-6 6-6z`;
};

const Histogram = () => (
  <Chart viewBox="77 278 1767 679" preserveAspectRatio="xMinYMin meet" role="img" aria-label="Histogram of vout_mc">
    <g stroke="#3c3c3c" strokeDasharray="1 1">
      {range(0, 55, 5).map((n) => (
        <path key={n} d={`M${px(-25)} ${Math.floor(py(n)) + 0.5}H${px(30)}`} />
      ))}
    </g>
    <g strokeDasharray="1 2">
      {range(-25, 30, 0.5).map((v) => (
        <path key={v} stroke={v % 5 === 0 ? "#4c4c4c" : "#303030"} d={`M${Math.floor(px(v)) + 0.5} ${py(55)}V${Y0}`} />
      ))}
    </g>
    <g stroke="#d4d4d4">
      <path d={`M141.500 ${py(55)}V${Y0}`} strokeWidth="1.500" />
      {range(0, 55, 0.5).map((n) => {
        const from = n % 5 === 0 ? 129 : n % 1 === 0 ? 133 : 137;
        return <path key={n} d={`M${from} ${Math.floor(py(n)) + 0.5}H142`} opacity={n % 1 ? 0.8 : 1} />;
      })}
      <path d={`M${px(-25)} 906.500H${px(30)}`} />
      {range(-25, 30, 0.5).map((v) => {
        const to = v % 5 === 0 ? 917 : v % 1 === 0 ? 914 : 910;
        return <path key={v} d={`M${Math.floor(px(v)) + 0.5} 906V${to}`} opacity={v % 1 ? 0.8 : 1} />;
      })}
    </g>
    <g fill="#d0d0d0">
      {range(0, 55, 5).map((n) => (
        <text key={n} x="102" y={py(n) + 4}>{n.toFixed(1)}</text>
      ))}
      {range(-25, 30, 5).map((v) => (
        <text key={v} x={px(v) - 1} y="934" textAnchor="middle">{v.toFixed(1)}</text>
      ))}
      <text x="984" y="949" textAnchor="middle">Values (m)</text>
      <text transform="translate(96 590) rotate(-90)" textAnchor="middle">No. of Samples</text>
    </g>
    <g fill="rgba(255,0,0,.135)" stroke="#b00000">
      {bins.map((n, i) =>
        n ? (
          <path key={i} d={`M${(binLeft + i * binWidth).toFixed(1)} ${Y0}V${Math.round(py(n)) + 0.5}h${binWidth}V${Y0}`} />
        ) : null,
      )}
    </g>
    <g stroke="#b40000" strokeWidth="1.200">
      {samples.map((xs, b) =>
        xs.map((x, i) => <circle key={`${b}-${i}`} cx={x + 0.3} cy={py(i + 1) + 0.4} r="2.900" fill="none" />),
      )}
    </g>
    <path d={curve} fill="none" stroke="#e4e4e4" />
    {sigmas.map((s) => {
      const x = px(s.v);
      return (
        <g key={s.name}>
          <path d={`M${x} ${py(55)}V${Y0}`} stroke="#dcdcdc" strokeWidth="1.100" />
          <path d={badge(Math.round(x - 1), s.w)} fill="rgba(10,0,0,.55)" stroke="#5a5a5a" />
          <path d={`M${x} 854V875`} stroke="#999" strokeWidth="1" />
          <text x={Math.round(x - 1)} y="866" textAnchor="middle" fill="#d4d4d4">{s.text}</text>
          <text x={x + s.dx} y="606" textAnchor="middle" fill="#b4b4b4">{s.name}</text>
        </g>
      );
    })}
  </Chart>
);

const CadIcon = () => (
  <Ico s={15}>
    <rect x="1" y="1" width="18" height="18" fill="#fafafa" stroke="#999" strokeWidth="2" />
    <path d="M13 8q-6-3-6 3t6 4" stroke="#444" strokeWidth="2.200" />
    <path d="M7 4h7" stroke="#e03030" strokeWidth="1.500" />
  </Ico>
);

export default function App() {
  return (
    <Desktop>
      <GlobalStyle />
      <IconLabel $top="461px">V</IconLabel>
      <IconLabel $top="663px">T</IconLabel>
      <IconLabel $top="883px">A</IconLabel>
      <Window>
        <VncBar>
          <svg width="16" height="16" viewBox="0 0 16 16" fill="none" aria-hidden="true">
            <rect width="16" height="16" rx="1" fill="#2b8cf0" />
            <path d="M2 4l2.500 8L7 4M9 5q4-2 4 1t-4 1.500M9 8q-1 4 2 4t3-2-3-2" stroke="#fff" strokeWidth="1.300" />
          </svg>
          <VncTitle>zc (puresemi02:49 (hx09)) - VNC Viewer</VncTitle>
          <Fill />
          <CaptionButton type="button" aria-label="Minimize">
            <svg width="10" height="10"><path d="M0 5.500h10" stroke="#000" /></svg>
          </CaptionButton>
          <CaptionButton type="button" aria-label="Maximize">
            <svg width="10" height="10"><rect x=".5" y=".5" width="9" height="9" fill="none" stroke="#000" /></svg>
          </CaptionButton>
          <CaptionButton type="button" aria-label="Close">
            <svg width="10" height="10"><path d="M0 0l10 10M10 0L0 10" stroke="#000" /></svg>
          </CaptionButton>
        </VncBar>
        <Guest>
          <Panel>
            <PanelButton type="button">
              <svg width="21" height="20" viewBox="0 0 21 20" aria-hidden="true">
                <circle cx="10.500" cy="10.500" r="10" fill="#151515" />
                <path d="M1 15q9 3 18-1-3 6-9 6-5 0-9-5z" fill="#fff" />
                <path d="M3 10q1-1 3-1l1-5q4-2 8 0l2 6q3 1 2 3-7 3-16-3z" fill="#c4202a" />
              </svg>
              Applications
            </PanelButton>
            <PanelButton type="button">Places</PanelButton>
            <PanelButton type="button">System</PanelButton>
            <Launchers>
              <svg width="20" height="20" viewBox="0 0 20 20" aria-hidden="true">
                <circle cx="10" cy="10" r="9" fill="#e8761c" />
                <circle cx="11" cy="8" r="6" fill="#2c62b0" />
                <path d="M2 5q3 1 5 0-1 3 3 4-1 4 5 3 2-3 2-6 4 6-1 11-8 5-14-3-2-5 0-9z" fill="#f0902a" />
              </svg>
              <svg width="20" height="20" viewBox="0 0 20 20" aria-hidden="true">
                <path d="M1 11L9 3l10 5-6 10z" fill="#dcb884" stroke="#9c7844" />
                <path d="M8 4l6-2 4 6-7 3z" fill="#d8e8f4" stroke="#6a8494" />
                <circle cx="13" cy="6" r="2" fill="#4a90b8" />
                <path d="M1 11l9 1 3 6" fill="none" stroke="#9c7844" />
              </svg>
              <svg width="20" height="20" viewBox="0 0 20 20" aria-hidden="true">
                <rect x="1" y="2" width="17" height="17" fill="#f4dc28" stroke="#c0a010" />
                <path d="M2 17h15" stroke="#d8b818" strokeWidth="2" />
                <path d="M9 13l1-3 8-9 2 1-8 9z" fill="#c89838" stroke="#5a4010" />
              </svg>
            </Launchers>
            <Fill $grow={6} />
            <Clock>
              <span>Mon Apr 11, 23:24</span>
              <b>hx09</b>
            </Clock>
            <Fill $grow={5} />
            <Tray>
              <Dots />
              <svg width="20" height="20" viewBox="0 0 20 20" aria-hidden="true">
                <path d="M1 15h18v3q-9 3-18 0z" fill="#3a3a3a" />
                <path d="M2 16L4 3q0-2 6-2t6 2l2 13q-8 2-16 0z" fill="#e0501c" />
                <ellipse cx="10" cy="9" rx="5" ry="6" fill="#f8a840" />
                <path d="M10 5v5M10 12v2" stroke="#fff" strokeWidth="2" />
              </svg>
              <svg width="20" height="20" viewBox="0 0 20 20" aria-hidden="true">
                <circle cx="10" cy="10" r="8.500" fill="#f2f2f2" stroke="#999" strokeWidth="2.500" />
                <path d="M10 4l1 8H9z" fill="#d01010" />
                <circle cx="10" cy="13" r="1.500" fill="#333" />
                <path d="M4 8l2 1M16 8l-2 1" stroke="#c66" />
              </svg>
              <svg width="30" height="20" viewBox="-8 0 30 20" fill="none" aria-hidden="true">
                <path d="M1 7h4l5-5v16l-5-5H1z" fill="#8a8a8a" stroke="#555" />
                <path d="M12 7q2 3 0 6M15 5q3 5 0 10M18 3q4 7 0 14" stroke="#6f9ad0" strokeWidth="1.400" />
              </svg>
            </Tray>
          </Panel>
          <AppTitle>
            <Wave />
            <span>Virtuoso (R) Visualization &amp; Analysis XL: ZC Amp_two_stage_3_offset_test adexl</span>
            <AppControls>
              <TinyButton type="button" aria-label="Minimize window">
                <svg width="8" height="8"><path d="M0 7h8" stroke="#ddd" strokeWidth="2" /></svg>
              </TinyButton>
              <TinyButton type="button" aria-label="Maximize window">
                <svg width="6" height="6"><path d="M.5 .5h5v5h-5zM0 1h6" fill="none" stroke="#ddd" /></svg>
              </TinyButton>
              <TinyButton type="button" aria-label="Close window">
                <svg width="8" height="8"><path d="M1 1l6 6M7 1L1 7" stroke="#ddd" strokeWidth="2" /></svg>
              </TinyButton>
            </AppControls>
          </AppTitle>
          <MenuBar>
            {menus.map(([m, u]) => (
              <MenuButton type="button" key={m}>
                {m.slice(0, u)}<u>{m[u]}</u>{m.slice(u + 1)}
              </MenuButton>
            ))}
            <Brand>c<span>a</span>dence</Brand>
          </MenuBar>
          <ToolRow $h={31}>
            <Group $w={198} $top={3}>
              <Grip />
              <Tool name="newWin" label="New window" />
              <Drop type="button" aria-label="New window options" />
              <Tool name="newSub" label="New subwindow" />
              <Drop type="button" aria-label="New subwindow options" />
              <Tool name="open" label="Open" />
              <Tool name="save" label="Save" $w={29} />
              <Tool name="print" label="Print" $w={29} />
              <Tool name="image" label="Save image" $w={29} />
            </Group>
            <Group $w={179} $gap={1} $top={3}>
              <Grip />
              <Tool name="undo" label="Undo" />
              <Tool name="redo" label="Redo" $dim />
              <Tool name="cut" label="Cut" />
              <Tool name="copy" label="Copy" $dim />
              <Tool name="paste" label="Paste" />
              <Tool name="del" label="Delete" />
            </Group>
            <Group $w={296} $gap={1} $top={3}>
              <Grip />
              <Tool name="back" label="Previous view" $dim />
              <Tool name="fwd" label="Next view" $dim />
              <Tool name="fit" label="Fit" />
              <Tool name="zin" label="Zoom in" />
              <Tool name="zout" label="Zoom out" />
              <Tool name="zwave" label="Zoom to trace" $dim />
              <Tool name="zarea" label="Zoom area" />
              <Tool name="zy" label="Zoom X" />
              <Tool name="zy" label="Zoom Y" />
              <Tool name="zlast" label="Last zoom" $dim />
            </Group>
            <Group $w={241} $top={3}>
              <Grip />
              <Combo value="family" w={71} h={24} pad={1} label="Trace grouping" />
              <Tool name="split" label="Split" />
              <Tool name="merge" label="Combine" $w={29} />
              <Tool name="swap" label="Swap" $w={29} />
              <Tool name="reloadAdd" label="Append reload" $w={29} $dim />
              <Tool name="reload" label="Reload" $w={29} $dim />
            </Group>
            <Group $top={3}>
              <Grip />
              <Tool name="grid" label="Toggle grid" $on />
            </Group>
          </ToolRow>
          <ToolRow $h={28}>
            <Group $w={287}>
              <Grip />
              <Tool name="wand" label="Auto layout" $on />
              <Tool name="cards" label="Card layout" $w={29} />
              <Tool name="rows" label="Horizontal layout" $w={29} />
              <Tool name="cols" label="Vertical layout" $w={29} />
              <Tool name="tiles" label="Grid layout" $w={29} />
              <ComboLabel>
                Subwindow:
                <Combo value="1" w={63} h={24} pad={13} label="Subwindow" />
              </ComboLabel>
            </Group>
            <Group $w={65}>
              <Grip />
              <Tool name="flag" label="Flag" />
              <Tool name="info" label="Tracking info" $on />
            </Group>
            <Group $w={309}>
              <Grip />
              <Tool name="prev" label="Previous point" $dim />
              <Tool name="next" label="Next point" $dim />
              <Combo value="Data Point" w={132} h={24} label="Point type" off />
              <LineEdit aria-label="Point value" disabled />
            </Group>
            <Group $w={36}>
              <Grip />
              <Tool name="hist" label="Histogram" $dim />
            </Group>
            <Group $w={36}>
              <Grip />
              <Tool name="calc" label="Calculator" />
            </Group>
            <Group>
              <Grip />
              <Combo value="Classic" w={135} h={24} pad={1} label="Workspace" />
              <Tool name="saveView" label="Save workspace" />
              <Tool name="hideView" label="Delete workspace" />
            </Group>
          </ToolRow>
          <TabStrip>
            <Tab>
              <svg width="13" height="13" aria-hidden="true">
                <rect x="1" y="1" width="11" height="11" fill="#fff" stroke="#333" strokeWidth="1.500" />
                <path d="M3 10l7-7" stroke="#333" />
              </svg>
              ZC:Amp_two_stage_3_offse...
              <TabClose type="button" aria-label="Close tab">
                <svg width="8" height="8"><path d="M1 1l6 6M7 1L1 7" stroke="#999" strokeWidth="2" /></svg>
              </TabClose>
            </Tab>
          </TabStrip>
          <Canvas>
            <DashFrame>
              <PlotHeader>
                <span>vout_mc</span>
                <span>1</span>
              </PlotHeader>
              <LegendRow>
                <Legend><Swatch />vout_mc</Legend>
                <FilterButton type="button" aria-label="Filter">
                  <svg width="13" height="12" aria-hidden="true">
                    <path d="M0 0h13L8 6v6H5V6z" fill="#f09a3c" />
                  </svg>
                </FilterButton>
              </LegendRow>
              <Histogram />
              <Stats>
                <div>Number = 200</div>
                <div>Mean = 152.466u</div>
                <div>Std Dev = 6.15732m</div>
              </Stats>
            </DashFrame>
          </Canvas>
          <MouseBar>
            <MouseLeft><Grip />mouse L:</MouseLeft>
            <span>M:</span>
            <span>R:</span>
          </MouseBar>
          <MessageBar>
            <Count>71(189)</Count>
            plot new graph subwindow
            <Nub />
          </MessageBar>
          <TaskBar>
            <Dots />
            <TaskButton type="button"><CadIcon />[virtuoso]</TaskButton>
            <TaskButton type="button">
              <Ico s={15}>
                <path d="M1 4q5-2 9 1 4-3 9-1v12q-5-2-9 1-4-3-9-1z" fill="#f6f0f0" stroke="#a89898" />
                <path d="M10 5v12" stroke="#a89898" />
              </Ico>
              [Library Manager]
            </TaskButton>
            <TaskButton type="button"><CadIcon />[Amp_two_stage_3_off...</TaskButton>
            <TaskButton type="button" $active><Wave />Virtuoso (R) Visualizati...</TaskButton>
            <SiteMark>bbs.eetop.cn</SiteMark>
            <FolderSpot>
              <svg width="20" height="20" viewBox="0 0 20 20" aria-hidden="true">
                <path d="M3 6l3-4 3 1 3-2 4 2 1 5H3z" fill="#f0f0f0" stroke="#888" />
                <path d="M1 5h7l2 2h9l-1 12H2z" fill="#3f78c4" stroke="#27508c" />
                <path d="M13 3l4 6 1-5z" fill="#fff" />
              </svg>
            </FolderSpot>
            <Pager>
              <Space type="button" $kind="on" aria-label="Workspace 1"><Wave /></Space>
              <Space type="button" $kind="open" aria-label="Workspace 2"><Wave /></Space>
              <Space type="button" $kind="open" aria-label="Workspace 3">
                <Ico s={14}>
                  <rect width="20" height="20" fill="#3c3c3c" />
                  <path d="M2 4l7 6-5 8M10 3l6 3-2 6 5 5M8 14h5" stroke="#bbb" strokeWidth="1.600" />
                </Ico>
              </Space>
              <Space type="button" $kind="empty" aria-label="Workspace 4" />
            </Pager>
          </TaskBar>
        </Guest>
        <VncHandle />
        <Watermark>
          <WatermarkHead>激活 Windows</WatermarkHead>
          转到"设置"以激活 Windows。
        </Watermark>
      </Window>
    </Desktop>
  );
}
